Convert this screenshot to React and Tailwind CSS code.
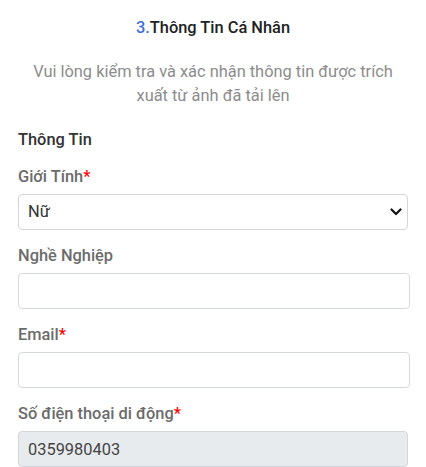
import { useState } from "react";

function Label({ children, required }) {
  return (
    <div className="text-[16.4px] leading-6 font-medium text-[#6b6b6b] mb-[5px]">
      {children}
      {required && <span className="text-[#ff0000]">*</span>}
    </div>
  );
}

function App() {
  const [gender, setGender] = useState("Nữ");
  const [job, setJob] = useState("");
  const [email, setEmail] = useState("");

  return (
    <div
      className="min-h-screen bg-white px-[18px] pt-4"
      style={{ fontFamily: "Roboto, 'Noto Sans', sans-serif" }}
    >
      {/* Header */}
      <h2 className="text-center text-[16.4px] leading-6 font-medium text-[#222]">
        <span className="text-[#3e6fd8]">3.</span>Thông Tin Cá Nhân
      </h2>
      <p className="mt-5 text-center text-[16.4px] leading-6 text-[#8c8c8c] px-1">
        Vui lòng kiểm tra và xác nhận thông tin được trích xuất từ ảnh đã tải lên
      </p>

      <div className="mt-5 text-[16.4px] leading-6 font-medium text-[#333]">
        Thông Tin
      </div>

      {/* Form */}
      <div className="mt-[13px] flex flex-col gap-[14px]">
        <div>
          <Label required>Giới Tính</Label>
          <div className="relative">
            <select
              value={gender}
              onChange={(e) => setGender(e.target.value)}
              className="w-full h-9 appearance-none rounded border border-[#d3d7db] bg-white pl-[9px] pr-8 text-[16.4px] text-[#333] outline-none"
            >
              <option>Nam</option>
              <option>Nữ</option>
            </select>
            <svg
              className="pointer-events-none absolute right-[6px] top-1/2 -translate-y-1/2"
              width="12"
              height="12"
              viewBox="0 0 12 12"
            >
              <polyline
                points="1.5,3.5 6,8 10.5,3.5"
                fill="none"
                stroke="#111"
                strokeWidth="2.2"
                strokeLinecap="round"
                strokeLinejoin="round"
              />
            </svg>
          </div>
        </div>

        <div>
          <Label>Nghề Nghiệp</Label>
          <input
            value={job}
            onChange={(e) => setJob(e.target.value)}
            className="w-[calc(100%+2px)] h-9 rounded border border-[#d7dadd] bg-white px-[9px] text-[16.4px] text-[#333] outline-none"
          />
        </div>

        <div>
          <Label required>Email</Label>
          <input
            value={email}
            onChange={(e) => setEmail(e.target.value)}
            className="w-[calc(100%+2px)] h-9 rounded border border-[#d7dadd] bg-white px-[9px] text-[16.4px] text-[#333] outline-none"
          />
        </div>

        <div>
          <Label required>Số điện thoại di động</Label>
          <input
            value="0359980403"
            readOnly
            className="w-full h-9 rounded border border-[#d3d7db] bg-[#e8ebee] px-[9px] text-[16.4px] text-[#444] outline-none"
          />
        </div>
      </div>
    </div>
  );
}

export default App;
